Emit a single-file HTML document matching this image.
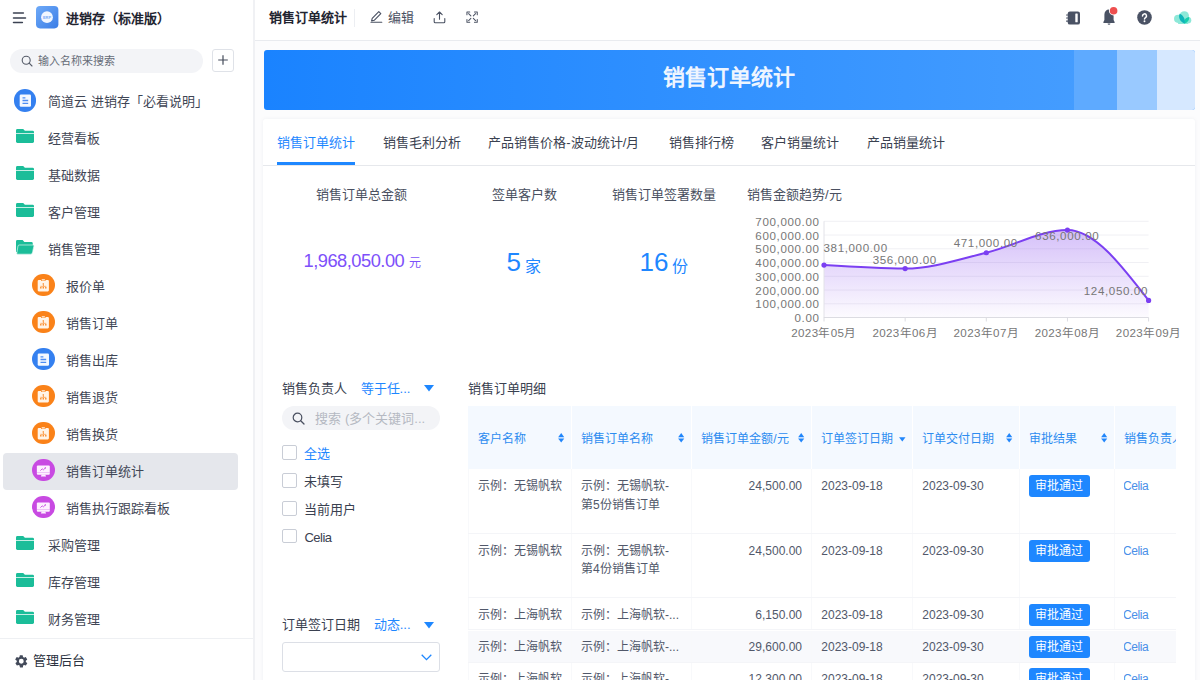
<!DOCTYPE html>
<html lang="zh-CN">
<head>
<meta charset="utf-8">
<title>销售订单统计</title>
<style>
*{box-sizing:border-box;margin:0;padding:0}
html,body{width:1200px;height:680px;overflow:hidden;background:#fff}
body{font-family:"Liberation Sans",sans-serif;font-size:13px;color:#3a4150;position:relative}
.abs{position:absolute}
svg{display:block;position:absolute;overflow:visible}
/* ---------- sidebar ---------- */
#side{position:absolute;left:0;top:0;width:255px;height:680px;background:#fff;border-right:2px solid #f0f1f4}
#side .ttl{position:absolute;left:65.5px;top:7.5px;height:22px;line-height:22px;font-size:13px;font-weight:bold;color:#1f2430;white-space:nowrap}
#side .search{position:absolute;left:10px;top:49px;width:193px;height:23.5px;border-radius:12px;background:#f3f4f7}
#side .search span{position:absolute;left:28px;top:1px;height:23px;line-height:23px;font-size:11px;color:#666c78;white-space:nowrap}
#side .plus{position:absolute;left:212px;top:49px;width:22px;height:22.5px;border:1px solid #dfe2e8;border-radius:3px;background:#fff}
.item{position:absolute;left:3px;width:235px;height:37px;border-radius:4px}
.item.sel{background:#e5e7ec}
.item .t{position:absolute;top:0;height:37px;line-height:37px;font-size:13px;color:#3f4655;white-space:nowrap}
.item.l1 .t{left:45px}
.item.l2 .t{left:63px}
.circ{position:absolute;width:22.600px;height:22.600px;border-radius:50%}
.l1 .circ{left:10.800px;top:6.600px}
.l2 .circ{left:29.100px;top:6.200px}
.fold{left:13.2px;top:9.1px}
#side .foot{position:absolute;left:0;top:637.5px;width:253px;height:43px;border-top:1px solid #eef0f3}
#side .foot span{position:absolute;left:33px;top:12.400px;height:20px;line-height:20px;font-size:13px;color:#2b3240}
/* ---------- main ---------- */
#main{position:absolute;left:255px;top:0;width:945px;height:680px;background:#fcfcfd}
#hdr{position:absolute;left:0;top:0;width:945px;height:41px;background:#fff;border-bottom:1px solid #e9ebef}
#hdr .name{position:absolute;left:14px;top:7px;height:22px;line-height:22px;font-size:13px;font-weight:bold;color:#1f2430;white-space:nowrap}
#hdr .div{position:absolute;left:99px;top:9px;width:1px;height:17.500px;background:#eceef2}
#hdr .edit{position:absolute;left:132.700px;top:6.500px;height:22px;line-height:22px;font-size:13px;color:#4a5162}
#banner{position:absolute;left:8.7px;top:50px;width:931px;height:60px;border-radius:3px;overflow:hidden;background:linear-gradient(90deg,#1a83ff 0%,#4aa0ff 100%)}
#banner i{position:absolute;top:0;height:60px;display:block}
#banner .h{position:absolute;left:0;top:0;width:931px;height:60px;line-height:55px;text-align:center;font-size:22px;font-weight:bold;color:#eef5ff;letter-spacing:0}
#card{position:absolute;left:8px;top:119px;width:932px;height:580px;background:#fff;border-radius:3px;box-shadow:0 0 4px rgba(40,50,80,.06)}
#tabs{position:absolute;left:0;top:0;width:932px;height:46.5px;border-bottom:1px solid #e6e8ec}
.tab{position:absolute;top:13px;height:22px;line-height:22px;font-size:13px;color:#3a4150;white-space:nowrap}
.tab.on{color:#1e87ff}
#tabs .ink{position:absolute;left:14.300px;top:42.5px;width:78px;height:3px;background:#1e87ff}
.st{position:absolute;height:22px;line-height:22px;font-size:13px;color:#4a5060;white-space:nowrap;text-align:center}
.num{position:absolute;white-space:nowrap;text-align:center}
.lbl{position:absolute;height:20px;line-height:20px;font-size:13px;white-space:nowrap}
.blue,.cbl.blue{color:#1e87ff}
.pill{position:absolute;left:19.400px;top:287px;width:157.500px;height:23.500px;border-radius:12px;background:#f3f4f7}
.pill span{position:absolute;left:33px;top:1px;height:23px;line-height:23px;font-size:13px;color:#b5b9c2;white-space:nowrap}
.cb{position:absolute;left:19.400px;width:14.300px;height:14.500px;border:1px solid #c9cdd6;border-radius:2px;background:#fff}
.cbl{position:absolute;left:41.400px;height:20px;line-height:20px;font-size:13px;color:#3a4150;white-space:nowrap}
.dsel{position:absolute;left:19.400px;top:523px;width:158px;height:29.500px;border:1px solid #dcdfe6;border-radius:3px;background:#fff}
/* table */
#tbl{position:absolute;left:205.300px;top:287px;width:707.700px;height:300px;overflow:hidden}
.th{position:absolute;top:0;height:63px;background:#f4f9ff;border-left:1px solid #fff}
.th span{position:absolute;left:9px;top:22.800px;height:20px;line-height:20px;font-size:12px;color:#2d8cf0;white-space:nowrap}
.row{position:absolute;left:0;width:707.700px;border-bottom:1px solid #f4f5f8}
.row.hv{background:#f8f9fc}
.c{position:absolute;top:0;bottom:0;border-left:1px solid #f8f9fb;font-size:12px;color:#51586a}
.c p{position:absolute;left:9px;right:0;top:8px;line-height:18.500px;white-space:nowrap;overflow:hidden}
.c.r p{text-align:right;right:9.300px}
.c a{color:#4a8fe8;letter-spacing:-.45px;margin-left:-1.200px}
.btn{position:absolute;left:9px;top:6px;width:61px;height:22px;line-height:23.500px;border-radius:3px;background:#1e87ff;color:#fff;font-size:12px;text-align:center}
</style>
</head>
<body>
<!-- SIDEBAR -->
<div id="side">
  <svg style="left:12px;top:10px" width="16" height="16" viewBox="0 0 16 16"><g stroke="#3b4252" stroke-width="1.5" stroke-linecap="round"><path d="M1.5 3H11.400"/><path d="M1.5 8H13.5"/><path d="M1.5 12.500H10.400"/></g></svg>
  <svg style="left:36px;top:6px" width="22.400" height="22.400" viewBox="0 0 22 22"><defs><linearGradient id="lg" x1="0" y1="0" x2="1" y2="1"><stop offset="0" stop-color="#6eaaf8"/><stop offset="1" stop-color="#3b7de6"/></linearGradient></defs><rect width="22" height="22" rx="4" fill="url(#lg)"/><circle cx="10.800" cy="11" r="5.800" fill="#f1f6ff"/><text x="10.800" y="12.400" text-anchor="middle" font-size="3.900" font-weight="bold" fill="#78aaf5" font-family="Liberation Sans, sans-serif">ERP</text></svg>
  <div class="ttl">进销存（标准版）</div>
  <div class="search"><svg style="left:10.5px;top:5.5px" width="12" height="12" viewBox="0 0 12 12"><circle cx="5.2" cy="5.2" r="4" fill="none" stroke="#555b68" stroke-width="1.1"/><path d="M8.2 8.2L11 11" stroke="#555b68" stroke-width="1.1" stroke-linecap="round"/></svg><span>输入名称来搜索</span></div>
  <div class="plus"><svg style="left:4px;top:4px" width="12" height="12" viewBox="0 0 12 12"><path d="M6 1.2V10.8M1.2 6H10.8" stroke="#444b5a" stroke-width="1.2"/></svg></div>
    <div class="item l1" style="top:82.6px"><div class="circ" style="background:#3480f0"><svg style="left:0;top:0" width="22.600" height="22.600" viewBox="0 0 22.600 22.600"><rect x="5.700" y="5.400" width="11.300" height="12.300" rx="1.300" fill="#f4f8ff"/><path d="M8.500 8.800h2.900M8.500 11.500h5.700M8.500 14.300h5.700" stroke="#4d8df3" stroke-width="1.300"/></svg></div><div class="t">简道云 进销存「必看说明」</div></div>
  <div class="item l1" style="top:119.6px"><svg class="fold" width="18" height="14" viewBox="0 0 18 14"><path fill="#1bbd99" d="M1.400 0h5.800l1.700 1.700h7.700A1.400 1.400 0 0 1 18 3.100v.8H0V1.400A1.400 1.400 0 0 1 1.400 0z"/><path fill="#1bbd99" d="M0 4.700h18v7.900a1.400 1.400 0 0 1-1.400 1.400H1.400A1.400 1.400 0 0 1 0 12.600z"/></svg><div class="t">经营看板</div></div>
  <div class="item l1" style="top:156.6px"><svg class="fold" width="18" height="14" viewBox="0 0 18 14"><path fill="#1bbd99" d="M1.400 0h5.800l1.700 1.700h7.700A1.400 1.400 0 0 1 18 3.100v.8H0V1.400A1.400 1.400 0 0 1 1.400 0z"/><path fill="#1bbd99" d="M0 4.700h18v7.900a1.400 1.400 0 0 1-1.400 1.400H1.400A1.400 1.400 0 0 1 0 12.600z"/></svg><div class="t">基础数据</div></div>
  <div class="item l1" style="top:193.6px"><svg class="fold" width="18" height="14" viewBox="0 0 18 14"><path fill="#1bbd99" d="M1.400 0h5.800l1.700 1.700h7.700A1.400 1.400 0 0 1 18 3.100v.8H0V1.400A1.400 1.400 0 0 1 1.400 0z"/><path fill="#1bbd99" d="M0 4.700h18v7.900a1.400 1.400 0 0 1-1.400 1.400H1.400A1.400 1.400 0 0 1 0 12.600z"/></svg><div class="t">客户管理</div></div>
  <div class="item l1" style="top:230.6px"><svg class="fold" width="18" height="14.200" viewBox="0 0 18 14.200"><path fill="#1bbd99" d="M1.400 0h5.200l1.800 2h7a1.400 1.400 0 0 1 1.400 1.400v8.500H0V1.400A1.400 1.400 0 0 1 1.400 0z"/><path fill="#1bbd99" stroke="#dff7f0" stroke-width=".7" d="M3.200 5h13.800a.9.900 0 0 1 .9 1.200l-1.600 6.900a1.400 1.400 0 0 1-1.400 1.100H1.600a.8.800 0 0 1-.8-1.100L2 6a1.300 1.300 0 0 1 1.200-1z"/></svg><div class="t">销售管理</div></div>
  <div class="item l2" style="top:267.6px"><div class="circ" style="background:#fa8219"><svg style="left:0;top:0" width="22.600" height="22.600" viewBox="0 0 22.600 22.600"><path d="M6.800 5.900h2.300v1.100h4.400V5.900h2.300a1.100 1.100 0 0 1 1.100 1.100v9.300a1.100 1.100 0 0 1-1.100 1.100H6.800a1.100 1.100 0 0 1-1.100-1.100V7a1.100 1.100 0 0 1 1.100-1.100z" fill="#fff4e8"/><rect x="9.600" y="5.300" width="3.400" height="1.100" rx=".4" fill="#fff4e8"/><g fill="#fa8219"><rect x="10.650" y="9.300" width="1.300" height="1.300"/><rect x="10.950" y="10.600" width=".7" height="1.700"/><rect x="8.300" y="11.900" width="6" height=".6"/><rect x="8.100" y="13.100" width="1.400" height="1.400"/><rect x="10.600" y="13.100" width="1.400" height="1.400"/><rect x="13.100" y="13.100" width="1.400" height="1.400"/></g></svg></div><div class="t">报价单</div></div>
  <div class="item l2" style="top:304.6px"><div class="circ" style="background:#fa8219"><svg style="left:0;top:0" width="22.600" height="22.600" viewBox="0 0 22.600 22.600"><path d="M6.800 5.900h2.300v1.100h4.400V5.900h2.300a1.100 1.100 0 0 1 1.100 1.100v9.300a1.100 1.100 0 0 1-1.100 1.100H6.800a1.100 1.100 0 0 1-1.100-1.100V7a1.100 1.100 0 0 1 1.100-1.100z" fill="#fff4e8"/><rect x="9.600" y="5.300" width="3.400" height="1.100" rx=".4" fill="#fff4e8"/><g fill="#fa8219"><rect x="10.650" y="9.300" width="1.300" height="1.300"/><rect x="10.950" y="10.600" width=".7" height="1.700"/><rect x="8.300" y="11.900" width="6" height=".6"/><rect x="8.100" y="13.100" width="1.400" height="1.400"/><rect x="10.600" y="13.100" width="1.400" height="1.400"/><rect x="13.100" y="13.100" width="1.400" height="1.400"/></g></svg></div><div class="t">销售订单</div></div>
  <div class="item l2" style="top:341.6px"><div class="circ" style="background:#3480f0"><svg style="left:0;top:0" width="22.600" height="22.600" viewBox="0 0 22.600 22.600"><rect x="5.700" y="5.400" width="11.300" height="12.300" rx="1.300" fill="#f4f8ff"/><path d="M8.500 8.800h2.900M8.500 11.500h5.700M8.500 14.300h5.700" stroke="#4d8df3" stroke-width="1.300"/></svg></div><div class="t">销售出库</div></div>
  <div class="item l2" style="top:378.6px"><div class="circ" style="background:#fa8219"><svg style="left:0;top:0" width="22.600" height="22.600" viewBox="0 0 22.600 22.600"><path d="M6.800 5.900h2.300v1.100h4.400V5.900h2.300a1.100 1.100 0 0 1 1.100 1.100v9.300a1.100 1.100 0 0 1-1.100 1.100H6.800a1.100 1.100 0 0 1-1.100-1.100V7a1.100 1.100 0 0 1 1.100-1.100z" fill="#fff4e8"/><rect x="9.600" y="5.300" width="3.400" height="1.100" rx=".4" fill="#fff4e8"/><g fill="#fa8219"><rect x="10.650" y="9.300" width="1.300" height="1.300"/><rect x="10.950" y="10.600" width=".7" height="1.700"/><rect x="8.300" y="11.900" width="6" height=".6"/><rect x="8.100" y="13.100" width="1.400" height="1.400"/><rect x="10.600" y="13.100" width="1.400" height="1.400"/><rect x="13.100" y="13.100" width="1.400" height="1.400"/></g></svg></div><div class="t">销售退货</div></div>
  <div class="item l2" style="top:415.6px"><div class="circ" style="background:#fa8219"><svg style="left:0;top:0" width="22.600" height="22.600" viewBox="0 0 22.600 22.600"><path d="M6.800 5.900h2.300v1.100h4.400V5.900h2.300a1.100 1.100 0 0 1 1.100 1.100v9.300a1.100 1.100 0 0 1-1.100 1.100H6.800a1.100 1.100 0 0 1-1.100-1.100V7a1.100 1.100 0 0 1 1.100-1.100z" fill="#fff4e8"/><rect x="9.600" y="5.300" width="3.400" height="1.100" rx=".4" fill="#fff4e8"/><g fill="#fa8219"><rect x="10.650" y="9.300" width="1.300" height="1.300"/><rect x="10.950" y="10.600" width=".7" height="1.700"/><rect x="8.300" y="11.900" width="6" height=".6"/><rect x="8.100" y="13.100" width="1.400" height="1.400"/><rect x="10.600" y="13.100" width="1.400" height="1.400"/><rect x="13.100" y="13.100" width="1.400" height="1.400"/></g></svg></div><div class="t">销售换货</div></div>
  <div class="item l2 sel" style="top:452.6px"><div class="circ" style="background:#c84ae2"><svg style="left:0;top:0" width="22.600" height="22.600" viewBox="0 0 22.600 22.600"><rect x="4.850" y="6.600" width="12.950" height="9.100" rx="1" fill="#fdf0ff"/><path d="M8.800 17.500h5.300l-.9-1.900H9.700z" fill="#fdf0ff"/><path d="M4.850 13.600h12.950" stroke="#c84ae2" stroke-width=".5" opacity=".6"/><path d="M8.400 11.600l1.800-1.800 1.200 1 2.200-2.100" fill="none" stroke="#c84ae2" stroke-width=".9"/><path d="M12.400 8.400h1.600v1.600z" fill="#c84ae2"/></svg></div><div class="t">销售订单统计</div></div>
  <div class="item l2" style="top:489.6px"><div class="circ" style="background:#c84ae2"><svg style="left:0;top:0" width="22.600" height="22.600" viewBox="0 0 22.600 22.600"><rect x="4.850" y="6.600" width="12.950" height="9.100" rx="1" fill="#fdf0ff"/><path d="M8.800 17.500h5.300l-.9-1.900H9.700z" fill="#fdf0ff"/><path d="M4.850 13.600h12.950" stroke="#c84ae2" stroke-width=".5" opacity=".6"/><path d="M8.400 11.600l1.800-1.800 1.200 1 2.200-2.100" fill="none" stroke="#c84ae2" stroke-width=".9"/><path d="M12.400 8.400h1.600v1.600z" fill="#c84ae2"/></svg></div><div class="t">销售执行跟踪看板</div></div>
  <div class="item l1" style="top:526.6px"><svg class="fold" width="18" height="14" viewBox="0 0 18 14"><path fill="#1bbd99" d="M1.400 0h5.800l1.700 1.700h7.700A1.400 1.400 0 0 1 18 3.100v.8H0V1.400A1.400 1.400 0 0 1 1.400 0z"/><path fill="#1bbd99" d="M0 4.700h18v7.900a1.400 1.400 0 0 1-1.400 1.400H1.400A1.400 1.400 0 0 1 0 12.600z"/></svg><div class="t">采购管理</div></div>
  <div class="item l1" style="top:563.6px"><svg class="fold" width="18" height="14" viewBox="0 0 18 14"><path fill="#1bbd99" d="M1.400 0h5.800l1.700 1.700h7.700A1.400 1.400 0 0 1 18 3.100v.8H0V1.400A1.400 1.400 0 0 1 1.400 0z"/><path fill="#1bbd99" d="M0 4.700h18v7.900a1.400 1.400 0 0 1-1.400 1.400H1.400A1.400 1.400 0 0 1 0 12.600z"/></svg><div class="t">库存管理</div></div>
  <div class="item l1" style="top:600.6px"><svg class="fold" width="18" height="14" viewBox="0 0 18 14"><path fill="#1bbd99" d="M1.400 0h5.800l1.700 1.700h7.700A1.400 1.400 0 0 1 18 3.100v.8H0V1.400A1.400 1.400 0 0 1 1.400 0z"/><path fill="#1bbd99" d="M0 4.700h18v7.900a1.400 1.400 0 0 1-1.400 1.400H1.400A1.400 1.400 0 0 1 0 12.600z"/></svg><div class="t">财务管理</div></div>

  <div class="foot">
    <svg style="left:13.700px;top:15.800px" width="14.600" height="14.600" viewBox="0 0 24 24"><path fill="#434a5a" d="M19.4 13a7.6 7.6 0 0 0 0-2l2.1-1.6a.5.5 0 0 0 .1-.7l-2-3.4a.5.5 0 0 0-.6-.2l-2.5 1a7.300 7.300 0 0 0-1.700-1l-.4-2.600a.5.5 0 0 0-.5-.5h-4a.5.5 0 0 0-.5.400l-.4 2.700a7.300 7.300 0 0 0-1.700 1l-2.500-1a.5.5 0 0 0-.6.200l-2 3.400a.5.5 0 0 0 .1.700L4.600 11a7.600 7.600 0 0 0 0 2l-2.100 1.600a.5.500 0 0 0-.1.700l2 3.400c.1.200.4.300.600.200l2.500-1c.5.400 1.100.700 1.700 1l.4 2.600c0 .300.200.500.500.500h4c.300 0 .5-.2.500-.4l.4-2.700c.600-.3 1.200-.6 1.700-1l2.500 1c.200.100.500 0 .600-.2l2-3.400a.5.500 0 0 0-.1-.7L19.400 13zM12 16a4 4 0 1 1 0-8 4 4 0 0 1 0 8z"/></svg>
    <span>管理后台</span>
  </div>
</div>
<!-- MAIN -->
<div id="main">
  <div id="hdr">
    <div class="name">销售订单统计</div>
    <div class="div"></div>
    <svg style="left:115px;top:9.500px" width="13" height="13" viewBox="0 0 13 13"><g fill="none" stroke="#4a5162" stroke-width="1.1" stroke-linejoin="round" stroke-linecap="round"><path d="M2.2 8.300L8.800 1.600l2 2L4.200 10.300l-2.600.600z"/><path d="M1 12.300H11.800"/></g></svg>
    <div class="edit">编辑</div>
    <svg style="left:177.500px;top:10.600px" width="13" height="13" viewBox="0 0 13 13"><g fill="none" stroke="#4a5162" stroke-width="1.1" stroke-linejoin="round" stroke-linecap="round"><path d="M6.500 8.300V1.200M3.800 3.700L6.500 1l2.700 2.700"/><path d="M1.200 7.500v3.200a1 1 0 0 0 1 1h8.600a1 1 0 0 0 1-1V7.500"/></g></svg>
    <svg style="left:211.300px;top:11.100px" width="12.200" height="12.200" viewBox="0 0 13 13"><g fill="none" stroke="#4a5162" stroke-width="1.100" stroke-linejoin="round" stroke-linecap="round"><path d="M1 4V1h3M9 1h3v3M12 9v3H9M4 12H1V9"/><path d="M5.200 5.200L2.800 2.800M7.800 5.200l2.400-2.400M7.800 7.800l2.400 2.400M5.200 7.800L2.800 10.200"/></g></svg>
    <!-- right icons -->
    <svg style="left:810.300px;top:11.100px" width="16" height="14" viewBox="0 0 16 14"><rect x="2.750" y=".4" width="12.250" height="13.200" rx="2.200" fill="#4a5264"/><rect x="10.300" y="2.500" width="2.400" height="8.800" rx=".5" fill="#fff"/><g stroke="#4a5264" stroke-width="1.100" stroke-linecap="round"><path d="M1.500 4H3M1.500 7H3M1.500 10.100H3"/></g></svg>
    <svg style="left:847px;top:6px" width="18" height="20" viewBox="0 0 18 20"><path fill="#4a5264" d="M7 3.600c-2.700 0-4.600 2-4.600 5v5.500l-1 1.800v1h11.200v-1l-1-1.800V8.600c0-3-1.900-5-4.600-5z"/><path fill="#4a5264" d="M5.600 17.400h2.800a1.400 1.400 0 0 1-2.800 0z"/><circle cx="11.600" cy="4.700" r="4.700" fill="#fff"/><circle cx="11.600" cy="4.700" r="3.800" fill="#ee4f4f"/></svg>
    <svg style="left:882px;top:10px" width="15" height="15" viewBox="0 0 15 15"><circle cx="7.500" cy="7.500" r="7.300" fill="#4a5264"/><path d="M5.500 5.900a2 2 0 1 1 3 1.700c-.7.400-1 .8-1 1.500" fill="none" stroke="#fff" stroke-width="1.500" stroke-linecap="round"/><circle cx="7.500" cy="11.200" r=".95" fill="#fff"/></svg>
    <svg style="left:919px;top:10px" width="18" height="15" viewBox="0 0 18 15"><g fill="#8de8d8"><circle cx="4.100" cy="8.800" r="4.100"/><circle cx="10.300" cy="5.900" r="4.700"/><circle cx="14" cy="10.250" r="3.300"/><path d="M4.100 9H14v5H4.100z"/></g><path fill="#16cfae" d="M10.100 13.600C9.800 9.800 11.800 7.200 15.200 6.900c.3 2.900-1.700 5.800-5.100 6.700z"/><path fill="#0fb5b9" d="M10.500 13.600C6 11.700 4 7.400 5.600 3.700c3.300 1.300 5.600 4.900 5.300 8.600z"/></svg>
  </div>
  <div id="banner">
    <i style="left:810px;width:43px;background:#5eaaff"></i>
    <i style="left:853px;width:40.500px;background:#99c9ff"></i>
    <i style="left:893.500px;width:38px;background:#d6e8ff"></i>
    <div class="h">销售订单统计</div>
  </div>
  <div id="card">
<div id="tabs">
<div class="tab on" style="left:14.3px">销售订单统计</div>
<div class="tab" style="left:120.3px">销售毛利分析</div>
<div class="tab" style="left:225.3px">产品销售价格-波动统计/月</div>
<div class="tab" style="left:406.0px">销售排行榜</div>
<div class="tab" style="left:498.0px">客户销量统计</div>
<div class="tab" style="left:603.5px">产品销量统计</div>
<div class="ink"></div>
</div>
<div class="st" style="left:38.3px;width:120px;top:64.5px">销售订单总金额</div>
<div class="st" style="left:201.0px;width:120px;top:64.5px">签单客户数</div>
<div class="st" style="left:341.0px;width:120px;top:64.5px">销售订单签署数量</div>
<div class="st" style="left:484.0px;top:64.5px;text-align:left">销售金额趋势/元</div>
<div class="num" style="left:40.5px;top:128.4px;height:28px;line-height:28px;color:#7d50fa"><span style="font-size:18.300px;letter-spacing:-.5px">1,968,050.00</span><span style="font-size:12px;margin-left:4.300px">元</span></div>
<div class="num blue" style="left:243.5px;top:125.0px;height:36px;line-height:36px"><span style="font-size:26px">5</span><span style="font-size:16px;margin-left:4px;position:relative;top:.5px">家</span></div>
<div class="num blue" style="left:376.5px;top:125.0px;height:36px;line-height:36px"><span style="font-size:26px">16</span><span style="font-size:16px;margin-left:4px;position:relative;top:.5px">份</span></div>
<svg style="left:477.0px;top:81.0px" width="455" height="150" viewBox="740 200 455 150"><defs><linearGradient id="ag" x1="0" y1="0" x2="0" y2="1"><stop offset="0" stop-color="#7c3aed" stop-opacity=".32"/><stop offset="1" stop-color="#7c3aed" stop-opacity=".02"/></linearGradient></defs><text x="819.600" y="322.00" text-anchor="end" font-size="11.600" letter-spacing=".62" fill="#777">0.00</text><path d="M824.0 303.75H1148.6" stroke="#f0f0f4" stroke-width="1"/><text x="819.600" y="308.25" text-anchor="end" font-size="11.600" letter-spacing=".62" fill="#777">100,000.00</text><path d="M824.0 290.00H1148.6" stroke="#f0f0f4" stroke-width="1"/><text x="819.600" y="294.50" text-anchor="end" font-size="11.600" letter-spacing=".62" fill="#777">200,000.00</text><path d="M824.0 276.25H1148.6" stroke="#f0f0f4" stroke-width="1"/><text x="819.600" y="280.75" text-anchor="end" font-size="11.600" letter-spacing=".62" fill="#777">300,000.00</text><path d="M824.0 262.50H1148.6" stroke="#f0f0f4" stroke-width="1"/><text x="819.600" y="267.00" text-anchor="end" font-size="11.600" letter-spacing=".62" fill="#777">400,000.00</text><path d="M824.0 248.75H1148.6" stroke="#f0f0f4" stroke-width="1"/><text x="819.600" y="253.25" text-anchor="end" font-size="11.600" letter-spacing=".62" fill="#777">500,000.00</text><path d="M824.0 235.00H1148.6" stroke="#f0f0f4" stroke-width="1"/><text x="819.600" y="239.50" text-anchor="end" font-size="11.600" letter-spacing=".62" fill="#777">600,000.00</text><path d="M824.0 221.25H1148.6" stroke="#f0f0f4" stroke-width="1"/><text x="819.600" y="225.75" text-anchor="end" font-size="11.600" letter-spacing=".62" fill="#777">700,000.00</text><path d="M824.00 265.11 C851.05 266.83 878.10 268.55 905.15 268.55 C932.20 268.55 959.25 259.15 986.30 252.74 C1013.35 246.32 1040.40 230.05 1067.45 230.05 C1094.50 230.05 1121.55 265.25 1148.60 300.44 L1148.60 317.5 L824.00 317.5 Z" fill="url(#ag)"/><path d="M824.0 221.25V318.0" stroke="#e2e2e8" stroke-width="1"/><path d="M824.0 317.5H1148.6" stroke="#dcdce2" stroke-width="1"/><path d="M824.00 317.5v4" stroke="#dcdce2" stroke-width="1"/><text x="824.00" y="337.300" text-anchor="middle" font-size="11.600" letter-spacing=".35" fill="#777">2023年05月</text><path d="M905.15 317.5v4" stroke="#dcdce2" stroke-width="1"/><text x="905.15" y="337.300" text-anchor="middle" font-size="11.600" letter-spacing=".35" fill="#777">2023年06月</text><path d="M986.30 317.5v4" stroke="#dcdce2" stroke-width="1"/><text x="986.30" y="337.300" text-anchor="middle" font-size="11.600" letter-spacing=".35" fill="#777">2023年07月</text><path d="M1067.45 317.5v4" stroke="#dcdce2" stroke-width="1"/><text x="1067.45" y="337.300" text-anchor="middle" font-size="11.600" letter-spacing=".35" fill="#777">2023年08月</text><path d="M1148.60 317.5v4" stroke="#dcdce2" stroke-width="1"/><text x="1148.60" y="337.300" text-anchor="middle" font-size="11.600" letter-spacing=".35" fill="#777">2023年09月</text><path d="M824.00 265.11 C851.05 266.83 878.10 268.55 905.15 268.55 C932.20 268.55 959.25 259.15 986.30 252.74 C1013.35 246.32 1040.40 230.05 1067.45 230.05 C1094.50 230.05 1121.55 265.25 1148.60 300.44" fill="none" stroke="#7b3ff2" stroke-width="2" stroke-linejoin="round"/><circle cx="824.00" cy="265.11" r="2.6" fill="#7b3ff2"/><circle cx="905.15" cy="268.55" r="2.6" fill="#7b3ff2"/><circle cx="986.30" cy="252.74" r="2.6" fill="#7b3ff2"/><circle cx="1067.45" cy="230.05" r="2.6" fill="#7b3ff2"/><circle cx="1148.60" cy="300.44" r="2.6" fill="#7b3ff2"/><text x="823.5" y="252.00" text-anchor="start" font-size="11.600" letter-spacing=".62" fill="#777">381,000.00</text><text x="904.8" y="263.50" text-anchor="middle" font-size="11.600" letter-spacing=".62" fill="#777">356,000.00</text><text x="985.8" y="247.00" text-anchor="middle" font-size="11.600" letter-spacing=".62" fill="#777">471,000.00</text><text x="1067.2" y="240.20" text-anchor="middle" font-size="11.600" letter-spacing=".62" fill="#777">636,000.00</text><text x="1148" y="295.20" text-anchor="end" font-size="11.600" letter-spacing=".62" fill="#777">124,050.00</text></svg>
<div class="lbl" style="left:19.4px;top:259.7px;color:#3a4150">销售负责人</div>
<div class="lbl blue" style="left:97.6px;top:259.7px">等于任...</div>
<svg style="left:160.5px;top:266.4px" width="10" height="7" viewBox="0 0 10 7"><path d="M0 0h10L5 6.500z" fill="#1e87ff"/></svg>
<div class="pill"><svg style="left:10px;top:5.500px" width="13" height="13" viewBox="0 0 13 13"><circle cx="5.500" cy="5.500" r="4.300" fill="none" stroke="#4a5060" stroke-width="1.200"/><path d="M8.700 8.700L12 12" stroke="#4a5060" stroke-width="1.300" stroke-linecap="round"/></svg><span>搜索 (多个关键词...</span></div>
<div class="cb" style="top:326.3px"></div><div class="cbl blue" style="top:325.3px">全选</div>
<div class="cb" style="top:354.2px"></div><div class="cbl" style="top:353.2px">未填写</div>
<div class="cb" style="top:382.0px"></div><div class="cbl" style="top:381.0px">当前用户</div>
<div class="cb" style="top:409.9px"></div><div class="cbl" style="top:408.9px;letter-spacing:-.5px">Celia</div>
<div class="lbl" style="left:19.4px;top:495.8px;color:#3a4150">订单签订日期</div>
<div class="lbl blue" style="left:110.7px;top:495.8px">动态...</div>
<svg style="left:160.5px;top:502.5px" width="10" height="7" viewBox="0 0 10 7"><path d="M0 0h10L5 6.500z" fill="#1e87ff"/></svg>
<div class="dsel"><svg style="left:137.500px;top:11px" width="11" height="7" viewBox="0 0 11 7"><path d="M.7.800L5.500 5.600 10.300.800" fill="none" stroke="#1e87ff" stroke-width="1.300"/></svg></div>
<div class="lbl" style="left:205.3px;top:260.0px;color:#3a4150">销售订单明细</div>
<div id="tbl">
<div class="th" style="left:0.0px;width:102.7px;border-left-color:#f4f9ff"><span>客户名称</span><svg style="right:6.700px;top:27.300px" width="6.400" height="9.600" viewBox="0 0 7 11"><path d="M3.500 0L7 4.800H0z" fill="#2186fb"/><path d="M3.500 11L7 6.200H0z" fill="#2186fb"/></svg></div>
<div class="th" style="left:102.7px;width:120.3px"><span>销售订单名称</span><svg style="right:6.700px;top:27.300px" width="6.400" height="9.600" viewBox="0 0 7 11"><path d="M3.500 0L7 4.800H0z" fill="#2186fb"/><path d="M3.500 11L7 6.200H0z" fill="#2186fb"/></svg></div>
<div class="th" style="left:223.0px;width:120.0px"><span>销售订单金额/元</span><svg style="right:6.700px;top:27.300px" width="6.400" height="9.600" viewBox="0 0 7 11"><path d="M3.500 0L7 4.800H0z" fill="#2186fb"/><path d="M3.500 11L7 6.200H0z" fill="#2186fb"/></svg></div>
<div class="th" style="left:343.0px;width:101.0px"><span>订单签订日期</span><svg style="right:7.100px;top:30.500px" width="6.600" height="4.600" viewBox="0 0 7 5"><path d="M0 .3h7L3.500 4.800z" fill="#2186fb"/></svg></div>
<div class="th" style="left:444.0px;width:106.7px"><span>订单交付日期</span><svg style="right:6.700px;top:27.300px" width="6.400" height="9.600" viewBox="0 0 7 11"><path d="M3.500 0L7 4.800H0z" fill="#2186fb"/><path d="M3.500 11L7 6.200H0z" fill="#2186fb"/></svg></div>
<div class="th" style="left:550.7px;width:95.3px"><span>审批结果</span><svg style="right:6.700px;top:27.300px" width="6.400" height="9.600" viewBox="0 0 7 11"><path d="M3.500 0L7 4.800H0z" fill="#2186fb"/><path d="M3.500 11L7 6.200H0z" fill="#2186fb"/></svg></div>
<div class="th" style="left:646.0px;width:115.7px"><span>销售负责人</span><svg style="right:6.700px;top:27.300px" width="6.400" height="9.600" viewBox="0 0 7 11"><path d="M3.500 0L7 4.800H0z" fill="#2186fb"/><path d="M3.500 11L7 6.200H0z" fill="#2186fb"/></svg></div>
<div class="row" style="top:63.0px;height:64.9px"><div class="c" style="left:0.0px;width:102.7px"><p style="top:8.3px">示例：无锡帆软</p></div><div class="c" style="left:102.7px;width:120.3px"><p style="top:8.3px">示例：无锡帆软-<br>第5份销售订单</p></div><div class="c r" style="left:223.0px;width:120.0px"><p style="top:8.3px">24,500.00</p></div><div class="c" style="left:343.0px;width:101.0px"><p style="top:8.3px">2023-09-18</p></div><div class="c" style="left:444.0px;width:106.7px"><p style="top:8.3px">2023-09-30</p></div><div class="c" style="left:550.7px;width:95.3px"><div class="btn" style="top:6.3px">审批通过</div></div><div class="c" style="left:646.0px;width:115.7px"><p style="top:8.3px"><a>Celia</a></p></div></div>
<div class="row" style="top:127.9px;height:63.8px"><div class="c" style="left:0.0px;width:102.7px"><p style="top:7.8px">示例：无锡帆软</p></div><div class="c" style="left:102.7px;width:120.3px"><p style="top:7.8px">示例：无锡帆软-<br>第4份销售订单</p></div><div class="c r" style="left:223.0px;width:120.0px"><p style="top:7.8px">24,500.00</p></div><div class="c" style="left:343.0px;width:101.0px"><p style="top:7.8px">2023-09-18</p></div><div class="c" style="left:444.0px;width:106.7px"><p style="top:7.8px">2023-09-30</p></div><div class="c" style="left:550.7px;width:95.3px"><div class="btn" style="top:5.8px">审批通过</div></div><div class="c" style="left:646.0px;width:115.7px"><p style="top:7.8px"><a>Celia</a></p></div></div>
<div class="row" style="top:191.7px;height:32.8px"><div class="c" style="left:0.0px;width:102.7px"><p style="top:8.2px">示例：上海帆软</p></div><div class="c" style="left:102.7px;width:120.3px"><p style="top:8.2px">示例：上海帆软-...</p></div><div class="c r" style="left:223.0px;width:120.0px"><p style="top:8.2px">6,150.00</p></div><div class="c" style="left:343.0px;width:101.0px"><p style="top:8.2px">2023-09-18</p></div><div class="c" style="left:444.0px;width:106.7px"><p style="top:8.2px">2023-09-30</p></div><div class="c" style="left:550.7px;width:95.3px"><div class="btn" style="top:6.2px">审批通过</div></div><div class="c" style="left:646.0px;width:115.7px"><p style="top:8.2px"><a>Celia</a></p></div></div>
<div class="row hv" style="top:224.5px;height:32.7px"><div class="c" style="left:0.0px;width:102.7px"><p style="top:7.2px">示例：上海帆软</p></div><div class="c" style="left:102.7px;width:120.3px"><p style="top:7.2px">示例：上海帆软-...</p></div><div class="c r" style="left:223.0px;width:120.0px"><p style="top:7.2px">29,600.00</p></div><div class="c" style="left:343.0px;width:101.0px"><p style="top:7.2px">2023-09-18</p></div><div class="c" style="left:444.0px;width:106.7px"><p style="top:7.2px">2023-09-30</p></div><div class="c" style="left:550.7px;width:95.3px"><div class="btn" style="top:5.2px">审批通过</div></div><div class="c" style="left:646.0px;width:115.7px"><p style="top:7.2px"><a>Celia</a></p></div></div>
<div class="row" style="top:257.2px;height:32.5px"><div class="c" style="left:0.0px;width:102.7px"><p style="top:6.7px">示例：上海帆软</p></div><div class="c" style="left:102.7px;width:120.3px"><p style="top:6.7px">示例：上海帆软-...</p></div><div class="c r" style="left:223.0px;width:120.0px"><p style="top:6.7px">12,300.00</p></div><div class="c" style="left:343.0px;width:101.0px"><p style="top:6.7px">2023-09-18</p></div><div class="c" style="left:444.0px;width:106.7px"><p style="top:6.7px">2023-09-30</p></div><div class="c" style="left:550.7px;width:95.3px"><div class="btn" style="top:4.7px">审批通过</div></div><div class="c" style="left:646.0px;width:115.7px"><p style="top:6.7px"><a>Celia</a></p></div></div>
</div>
</div>

</div>
</body>
</html>
